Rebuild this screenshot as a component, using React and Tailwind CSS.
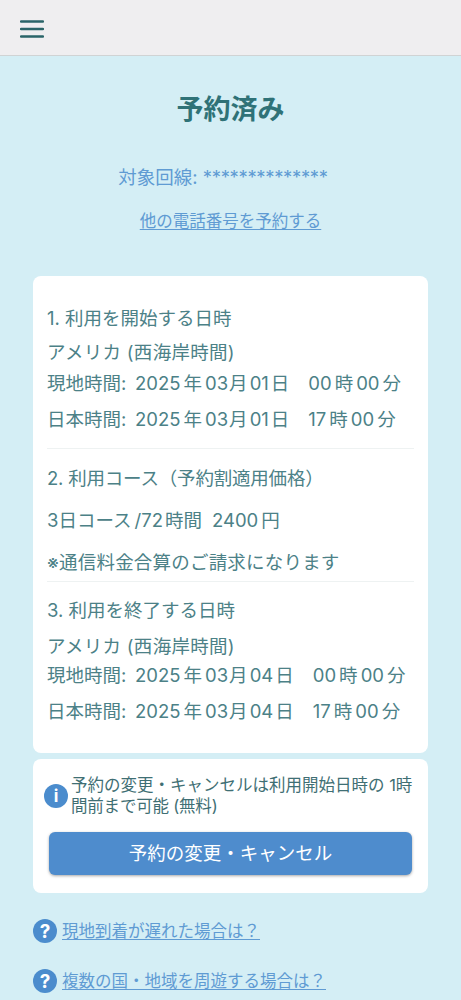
// ── one "現地時間: 2025年03月01日 00時00分" line ──────
const TimeRow = ({ label, day, hour, top }) => (
    <div className={`flex items-center h-[30px] text-[18.5px] whitespace-nowrap ${top}`}>
        <span className="w-[88px] shrink-0">{label}:</span>
        <span>2025</span>
        <span className="ml-[3px]">年</span>
        <span className="ml-[3px]">03</span>
        <span className="ml-[1px]">月</span>
        <span className="ml-[2px]">{day}</span>
        <span className="ml-[2px]">日</span>
        <span className="ml-[19px]">{hour}</span>
        <span className="ml-[3px]">時</span>
        <span className="ml-[3px]">00</span>
        <span className="ml-[3px]">分</span>
    </div>
);

const Divider = ({ cls }) => <div className={`h-px bg-[#eef2f2] ${cls}`} />;

const HelpLink = ({ text, cls }) => (
    <div className={`flex items-center ${cls}`}>
        <span className="flex items-center justify-center w-[24px] h-[24px] rounded-full bg-[#4b8ccd] text-white text-[19px] font-bold leading-none shrink-0">
            ?
        </span>
        <a className="ml-[5px] text-[16.5px] leading-[24px] text-[#5f9bd3] underline underline-offset-2">{text}</a>
    </div>
);

export default function App() {
    return (
        <div className="h-[1000px] overflow-hidden bg-[#d4eef5] font-['Inter','Noto_Sans_CJK_JP',sans-serif] text-[#4c8187]">
            {/* Header */}
            <header className="h-[56px] bg-[#efeef0] border-b border-[#d0d3d4] flex items-center pl-[20px]">
                <svg width="24" height="18" viewBox="0 0 24 18" className="mt-[2px] text-[#2a6468]">
                    <path d="M1 1.5h22M1 9h22M1 16.5h22" stroke="currentColor" strokeWidth="2.5" strokeLinecap="round" />
                </svg>
            </header>

            <main className="flex flex-col">
                <h1 className="mt-[35px] text-center text-[27px] leading-[38px] font-bold text-[#2f7277]">予約済み</h1>
                <p className="mt-[34px] pr-[15px] text-center text-[18.5px] leading-[28px] text-[#5f9bd3]">
                    対象回線: <span className="tracking-[-0.35px]">**************</span>
                </p>
                <p className="mt-[17px] text-center text-[16.5px] leading-[26px]">
                    <a className="text-[#5f9bd3] underline underline-offset-2">他の電話番号を予約する</a>
                </p>

                {/* Details card */}
                <section className="mt-[42px] mx-[33px] h-[477px] bg-white rounded-[8px] px-[14px] pt-[27px]">
                    <div className="h-[30px] leading-[30px] text-[18.5px]">1. 利用を開始する日時</div>
                    <div className="mt-[4px] h-[30px] leading-[30px] text-[18.5px] tracking-[0.3px]">アメリカ (西海岸時間)</div>
                    <TimeRow label="現地時間" day="01" hour="00" top="mt-[2px]" />
                    <TimeRow label="日本時間" day="01" hour="17" top="mt-[6px]" />
                    <Divider cls="mt-[13px]" />
                    <div className="mt-[14px] h-[30px] leading-[30px] text-[18.5px] tracking-[-0.2px]">2. 利用コース（予約割適用価格）</div>
                    <div className="mt-[12px] flex h-[30px] leading-[30px] text-[18.5px] whitespace-nowrap">
                        <span>3日コース</span>
                        <span className="ml-[3px]">/72</span>
                        <span className="ml-[2px]">時間</span>
                        <span className="ml-[10px]">2400</span>
                        <span className="ml-[3px]">円</span>
                    </div>
                    <div className="mt-[12px] h-[30px] leading-[30px] text-[18.5px] tracking-[0.2px]">※通信料金合算のご請求になります</div>
                    <Divider cls="mt-[4px]" />
                    <div className="mt-[13px] h-[30px] leading-[30px] text-[18.5px]">3. 利用を終了する日時</div>
                    <div className="mt-[6px] h-[30px] leading-[30px] text-[18.5px] tracking-[0.3px]">アメリカ (西海岸時間)</div>
                    <TimeRow label="現地時間" day="04" hour="00" top="mt-[0px]" />
                    <TimeRow label="日本時間" day="04" hour="17" top="mt-[6px]" />
                </section>

                {/* Cancel card */}
                <section className="mt-[6px] mx-[33px] h-[134px] bg-white rounded-[8px] pl-[11px] pr-[15px] pt-[16px]">
                    <div className="flex items-center">
                        <span className="flex items-center justify-center w-[24px] h-[24px] rounded-full bg-[#4b8ccd] text-white text-[17px] font-bold leading-none shrink-0">
                            i
                        </span>
                        <p className="ml-[3px] text-[16.5px] leading-[21px] text-[#3f6f74] whitespace-nowrap">
                            予約の変更・キャンセルは利用開始日時の 1時
                            <br />
                            <span className="tracking-[-0.2px]">間前まで可能 (無料)</span>
                        </p>
                    </div>
                    <button className="mt-[15px] ml-[5px] block w-[363px] h-[43px] rounded-[6px] bg-[#4e8ccd] text-white text-[18.5px] shadow-[0_1px_3px_rgba(0,0,0,0.35)]">
                        予約の変更・キャンセル
                    </button>
                </section>

                <HelpLink text="現地到着が遅れた場合は？" cls="mt-[26px] mx-[33px]" />
                <HelpLink text="複数の国・地域を周遊する場合は？" cls="mt-[26px] mx-[33px]" />
            </main>
        </div>
    );
}
